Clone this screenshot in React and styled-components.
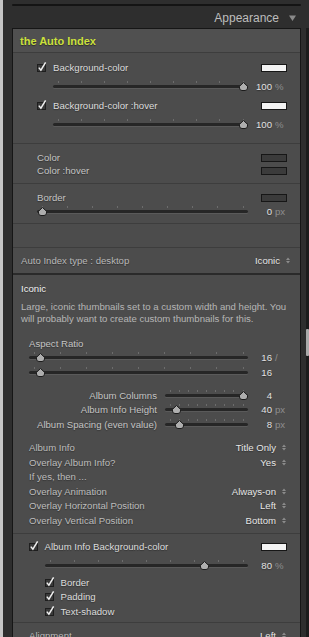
import React from "react";
import styled, { createGlobalStyle } from "styled-components";

const GlobalStyle = createGlobalStyle`
  html, body { margin: 0; padding: 0; background: #c6c6c6; }
  body {
    font-family: "Liberation Sans", Arial, sans-serif;
    font-size: 9.6px;
    color: #c6c6c6;
  }
  * { box-sizing: border-box; }
`;

const Page = styled.div`
  display: flex;
  width: 309px;
  height: 637px;
  overflow: hidden;
`;

const Gutter = styled.div`
  flex: none;
  width: 3px;
  background: #c6c6c6;
`;

const Frame = styled.div`
  flex: 1;
  min-width: 0;
  display: flex;
  flex-direction: column;
  background: #2e2e2e;
  padding-left: 9px;
`;

const TopRule = styled.div`
  flex: none;
  width: 289px;
  height: 2px;
  margin: 4px 0 2px;
  background: #141414;
  border-radius: 1px;
`;

const HeaderBar = styled.div`
  flex: none;
  width: 289px;
  height: 20px;
  display: flex;
  align-items: center;
  justify-content: flex-end;
  gap: 10px;
  padding-right: 5px;
  font-size: 12px;
  color: #bdbdbd;
`;

const Body = styled.div`
  flex: 1;
  min-height: 0;
  display: flex;
`;

const Panel = styled.div`
  flex: none;
  width: 289px;
  border: 1px solid #161616;
  border-bottom: none;
  background: #4c4c4c;
  overflow: hidden;
  display: flex;
  flex-direction: column;
`;

const ScrollCol = styled.div`
  flex: 1;
  padding-left: 5px;
  display: flex;
`;

const ScrollTrack = styled.div`
  width: 3px;
  background: #1c1c1c;
  display: flex;
  flex-direction: column;
`;

const ScrollThumb = styled.div`
  margin-top: 301px;
  height: 27px;
  background: #a9a9a9;
  border-radius: 1px;
`;

const Section = styled.div`
  flex: none;
  border-top: ${(p) =>
    p.$first ? "none" : p.$thick ? "2px solid #2a2a2a" : "1px solid #3d3d3d"};
  padding: ${(p) => p.$pad || "0"};
  background: ${(p) => p.$bg || "transparent"};
`;

const Row = styled.div`
  display: flex;
  align-items: center;
  height: ${(p) => p.$h}px;
  padding-left: ${(p) => p.$indent || 0}px;
  padding-right: ${(p) => (p.$right == null ? 13 : p.$right)}px;
  margin-top: ${(p) => p.$mt || 0}px;
`;

const Title = styled.span`
  font-size: 11px;
  font-weight: bold;
  color: #cde13c;
  text-shadow: 0 1px 1px rgba(0, 0, 0, 0.45);
`;

const Label = styled.span`
  color: ${(p) => p.$tone || "#c4c4c4"};
  white-space: nowrap;
  text-shadow: 0 1px 1px rgba(0, 0, 0, 0.35);
`;

const SideLabel = styled(Label)`
  flex: none;
  width: 144px;
  margin-left: -0px;
  margin-right: 8px;
  text-align: right;
`;

const Desc = styled.p`
  margin: 6px 0 0;
  padding: 0 11px 0 8px;
  line-height: 12px;
  color: #b6b6b6;
`;

const Swatch = styled.span`
  margin-left: auto;
  width: 26px;
  height: 8px;
  border: 1px solid #161616;
  background: ${(p) => (p.$light ? "#f3f3f3" : "#3b3b3b")};
`;

const CheckWrap = styled.span`
  display: flex;
  align-items: center;
  gap: ${(p) => p.$gap || 5.5}px;
`;

const CheckSvg = styled.svg`
  flex: none;
  width: 10px;
  height: 11px;
  margin-top: -2px;
`;

const Check = ({ label, tone, gap }) => (
  <CheckWrap $gap={gap}>
    <CheckSvg viewBox="0 0 10 11">
      <rect x="0.5" y="3.5" width="8" height="7" fill="#3a3a3a" stroke="#1e1e1e" />
      <path d="M1.8 6.6 L3.9 9.2 L8.6 1.4" fill="none" stroke="#efefef" strokeWidth="1.5" />
    </CheckSvg>
    <Label $tone={tone}>{label}</Label>
  </CheckWrap>
);

const Track = styled.div`
  flex: 1;
  min-width: 0;
  height: 100%;
  display: flex;
  flex-direction: column;
  justify-content: center;
  gap: 2px;
  padding-bottom: 4px;
`;

const Ticks = styled.div`
  display: flex;
  justify-content: space-between;
  height: 2px;
  margin: 0 4.5px;
`;

const Tick = styled.span`
  width: 1px;
  height: 2px;
  background: #6c6c6c;
`;

const Groove = styled.div`
  position: relative;
  height: 3px;
  background: #262626;
  border-radius: 2px;
  box-shadow: 0 1px 0 #5a5a5a;
`;

const ThumbSvg = styled.svg`
  position: absolute;
  top: -3px;
  width: 9px;
  height: 9px;
`;

const ValueCell = styled.span`
  flex: none;
  width: 39px;
  display: flex;
  align-items: center;
`;

const Num = styled.span`
  width: 24px;
  text-align: right;
  color: #e2e2e2;
  text-shadow: 0 1px 1px rgba(0, 0, 0, 0.35);
`;

const Unit = styled.span`
  margin-left: 3px;
  color: #8e8e8e;
`;

const Slider = ({ value, num, unit }) => (
  <>
    <Track>
      <Ticks>
        {Array.from({ length: 9 }).map((_, i) => (
          <Tick key={i} />
        ))}
      </Ticks>
      <Groove>
        <ThumbSvg
          viewBox="0 0 9 9"
          style={{ left: `calc(5px + (100% - 10px) * ${value} - 4.5px)` }}
        >
          <path
            d="M4.5 0.5 L8.5 4.3 L8.5 6 Q8.5 8.5 6 8.5 L3 8.5 Q0.5 8.5 0.5 6 L0.5 4.3 Z"
            fill="#aeaeae"
            stroke="#1c1c1c"
            strokeWidth="1"
          />
        </ThumbSvg>
      </Groove>
    </Track>
    <ValueCell>
      <Num>{num}</Num>
      {unit && <Unit>{unit}</Unit>}
    </ValueCell>
  </>
);

const SelectValue = styled.span`
  margin-left: auto;
  display: flex;
  align-items: center;
  gap: 6px;
  color: #e6e6e6;
  text-shadow: 0 1px 1px rgba(0, 0, 0, 0.35);
`;

const Arrows = () => (
  <svg width="4" height="7" viewBox="0 0 4 7">
    <path d="M0 3 L2 0.5 L4 3 Z M0 4 L2 6.5 L4 4 Z" fill="#8c8c8c" />
  </svg>
);

const Select = ({ value }) => (
  <SelectValue>
    {value}
    <Arrows />
  </SelectValue>
);

const Collapse = () => (
  <svg width="7" height="6" viewBox="0 0 7 6">
    <path d="M0 0.5 L7 0.5 L3.5 6 Z" fill="#8a8a8a" />
  </svg>
);

const selects = [
  ["Album Info", "Title Only"],
  ["Overlay Album Info?", "Yes"],
  ["If yes, then ...", null],
  ["Overlay Animation", "Always-on"],
  ["Overlay Horizontal Position", "Left"],
  ["Overlay Vertical Position", "Bottom"],
];

const sideSliders = [
  ["Album Columns", 1, "4", null],
  ["Album Info Height", 0.083, "40", "px"],
  ["Album Spacing (even value)", 0.125, "8", "px"],
];

export default function App() {
  return (
    <>
      <GlobalStyle />
      <Page>
        <Gutter />
        <Frame>
          <TopRule />
          <HeaderBar>
            Appearance
            <Collapse />
          </HeaderBar>
          <Body>
            <Panel>
              <Section $first $bg="#505050">
                <Row $h={23} $indent={7}>
                  <Title>the Auto Index</Title>
                </Row>
              </Section>

              <Section $pad="5px 0 9px">
                <Row $h={19} $indent={24}>
                  <Check label="Background-color" tone="#dcdcdc" gap={6} />
                  <Swatch $light />
                </Row>
                <Row $h={19} $indent={40}>
                  <Slider value={1} num="100" unit="%" />
                </Row>
                <Row $h={19} $indent={24}>
                  <Check label="Background-color :hover" tone="#dcdcdc" gap={6} />
                  <Swatch $light />
                </Row>
                <Row $h={19} $indent={40}>
                  <Slider value={1} num="100" unit="%" />
                </Row>
              </Section>

              <Section $pad="7px 0 6px">
                <Row $h={13} $indent={24}>
                  <Label>Color</Label>
                  <Swatch />
                </Row>
                <Row $h={13} $indent={24}>
                  <Label>Color :hover</Label>
                  <Swatch />
                </Row>
              </Section>

              <Section $pad="7px 0 5px">
                <Row $h={13} $indent={24}>
                  <Label>Border</Label>
                  <Swatch />
                </Row>
                <Row $h={14} $indent={24}>
                  <Slider value={0} num="0" unit="px" />
                </Row>
              </Section>

              <Section $pad="23px 0 0" />

              <Section>
                <Row $h={25} $indent={8} $right={10}>
                  <Label $tone="#b8b8b8">Auto Index type : desktop</Label>
                  <Select value="Iconic" />
                </Row>
              </Section>

              <Section $thick $pad="6px 0 5.5px">
                <Row $h={14} $indent={8}>
                  <Label $tone="#f2f2f2">Iconic</Label>
                </Row>
                <Desc>
                  Large, iconic thumbnails set to a custom width and height. You
                  will probably want to create custom thumbnails for this.
                </Desc>
                <Row $h={14} $indent={16} $mt={11}>
                  <Label>Aspect Ratio</Label>
                </Row>
                <Row $h={15} $indent={16}>
                  <Slider value={0.03} num="16" unit="/" />
                </Row>
                <Row $h={15} $indent={16}>
                  <Slider value={0.03} num="16" />
                </Row>
                {sideSliders.map(([label, v, num, unit], i) => (
                  <Row key={label} $h={14.5} $mt={i === 0 ? 8 : 0}>
                    <SideLabel>{label}</SideLabel>
                    <Slider value={v} num={num} unit={unit} />
                  </Row>
                ))}
                {selects.map(([label, value], i) => (
                  <Row key={label} $h={14.5} $indent={16} $right={14} $mt={i === 0 ? 9 : 0}>
                    <Label $tone="#bdbdbd">{label}</Label>
                    {value && <Select value={value} />}
                  </Row>
                ))}
              </Section>

              <Section $pad="3px 0 3.5px">
                <Row $h={19} $indent={16}>
                  <Check label="Album Info Background-color" tone="#dcdcdc" />
                  <Swatch $light />
                </Row>
                <Row $h={19} $indent={32}>
                  <Slider value={0.8} num="80" unit="%" />
                </Row>
                <Row $h={14.5} $indent={32}>
                  <Check label="Border" tone="#dcdcdc" />
                </Row>
                <Row $h={14.5} $indent={32}>
                  <Check label="Padding" tone="#dcdcdc" />
                </Row>
                <Row $h={14.5} $indent={32}>
                  <Check label="Text-shadow" tone="#dcdcdc" />
                </Row>
              </Section>

              <Section $pad="5px 0 0">
                <Row $h={14} $indent={16} $right={14}>
                  <Label $tone="#bdbdbd">Alignment</Label>
                  <Select value="Left" />
                </Row>
              </Section>
            </Panel>
            <ScrollCol>
              <ScrollTrack>
                <ScrollThumb />
              </ScrollTrack>
            </ScrollCol>
          </Body>
        </Frame>
      </Page>
    </>
  );
}
